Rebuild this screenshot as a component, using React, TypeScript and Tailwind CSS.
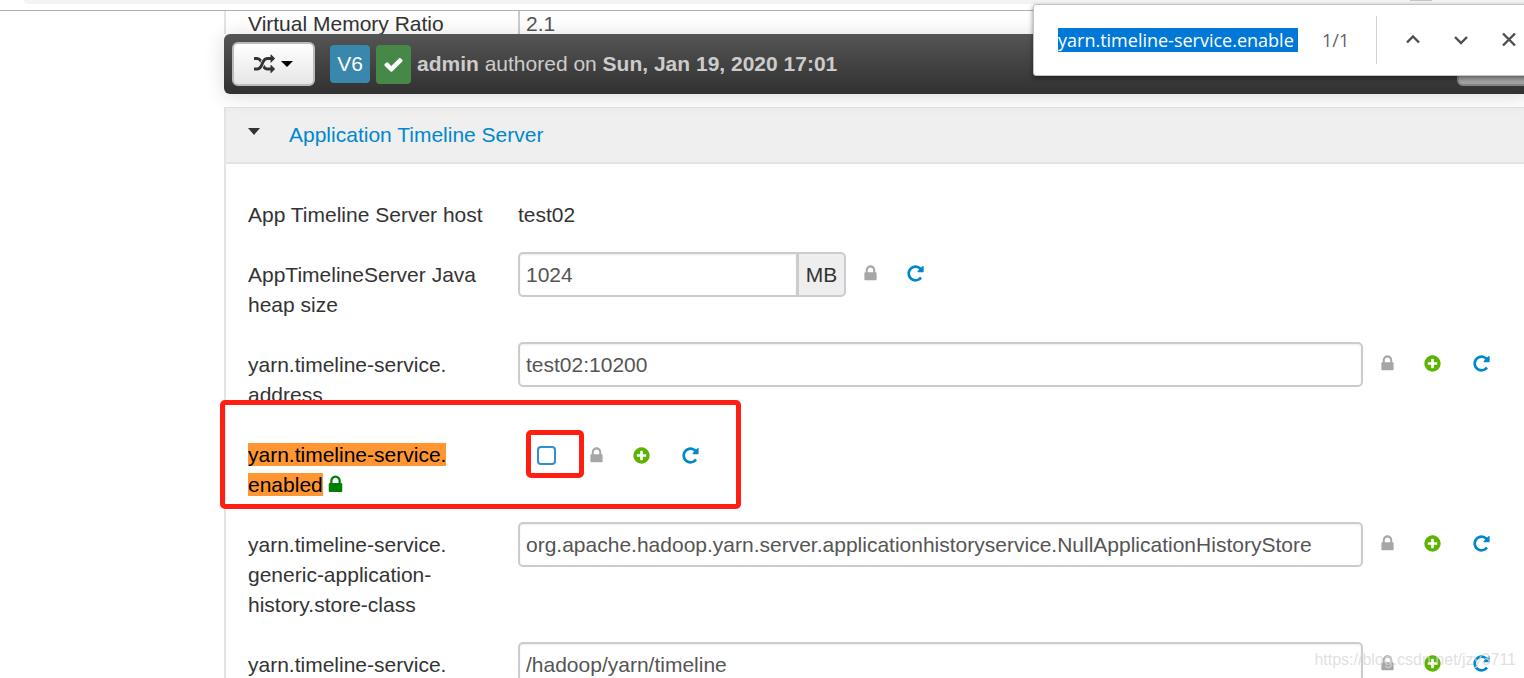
import type { ReactNode } from "react";

function Icon({ d, className }: { d: string; className: string }) {
  return (
    <svg viewBox="0 0 1792 1792" className={className} fill="currentColor" aria-hidden="true">
      <path d={d} />
    </svg>
  );
}

const LOCK =
  "M640 768h512v-192q0-106-75-181t-181-75-181 75-75 181v192zm832 96v576q0 40-28 68t-68 28h-960q-40 0-68-28t-28-68v-576q0-40 28-68t68-28h32v-192q0-184 132-316t316-132 316 132 132 316v192h32q40 0 68 28t28 68z";
const PLUS =
  "M1344 960v-128q0-26-19-45t-45-19h-256v-256q0-26-19-45t-45-19h-128q-26 0-45 19t-19 45v256h-256q-26 0-45 19t-19 45v128q0 26 19 45t45 19h256v256q0 26 19 45t45 19h128q26 0 45-19t19-45v-256h256q26 0 45-19t19-45zm320-64q0 209-103 385.5t-279.5 279.5-385.5 103-385.5-103-279.5-279.5-103-385.5 103-385.5 279.5-279.5 385.5-103 385.5 103 279.5 279.5 103 385.5z";
const REPEAT =
  "M1664 256v448q0 26-19 45t-45 19h-448q-42 0-59-40-17-39 14-69l138-138q-148-137-349-137-104 0-198.5 40.5t-163.5 109.5-109.5 163.5-40.5 198.5 40.5 198.5 109.5 163.5 163.5 109.5 198.5 40.5q119 0 225-52t179-147q7-10 23-12 15 0 25 9l137 138q9 8 9.5 20.5t-7.5 22.5q-109 132-264 204.5t-327 72.5q-156 0-298-61t-245-164-164-245-61-298 61-298 164-245 245-164 298-61q147 0 284.5 55.5t244.5 156.5l130-129q29-31 70-14 39 17 39 59z";
const CHECK =
  "M1671 566q0 40-28 68l-724 724-136 136q-28 28-68 28t-68-28l-136-136-362-362q-28-28-28-68t28-68l136-136q28-28 68-28t68 28l294 295 656-657q28-28 68-28t68 28l136 136q28 28 28 68z";
const RANDOM =
  "M666 481q-60 92-137 273-22-45-37-72.5t-40.5-63.5-51-56.5-63-35-81.5-14.5h-224q-14 0-23-9t-9-23v-192q0-14 9-23t23-9h224q250 0 410 225zm1126 799q0 14-9 23l-320 320q-9 9-23 9-13 0-22.5-9.5t-9.5-22.5v-192q-32 0-85 .5t-81 1-73-1-71-5-64-10.5-63-18.5-58-28.5-59-40-55-53.5-56-69.5q59-93 136-273 22 45 37 72.5t40.5 63.5 51 56.5 63 35 81.5 14.5h256v-192q0-14 9-23t23-9q12 0 24 10l319 319q9 9 9 23zm0-896q0 14-9 23l-320 320q-9 9-23 9-13 0-22.5-9.5t-9.5-22.5v-192h-256q-48 0-87 15t-69 45-51 61.5-45 77.5q-32 62-78 171-29 66-49.5 111t-54 105-64 100-74 83-90 68.5-106.5 42-128 16.5h-224q-14 0-23-9t-9-23v-192q0-14 9-23t23-9h224q48 0 87-15t69-45 51-61.5 45-77.5q32-62 78-171 29-66 49.5-111t54-105 64-100 74-83 90-68.5 106.5-42 128-16.5h256v-192q0-14 9-23t23-9q12 0 24 10l319 319q9 9 9 23z";

const fieldClass =
  "h-[45px] min-w-0 border-2 border-[#cccccc] bg-white px-[6px] text-[#555555] shadow-[inset_0_1px_2px_rgba(0,0,0,0.08)] outline-none";

function Actions({ override = true }: { override?: boolean }) {
  return (
    <div className="flex h-[42px] shrink-0 items-center pl-[15px]">
      <button type="button" aria-label="Final" className="text-[#a6a6a6]">
        <Icon d={LOCK} className="size-[19px]" />
      </button>
      {override && (
        <button type="button" aria-label="Override" className="ml-[26px] text-[#5ab400]">
          <Icon d={PLUS} className="size-[19px]" />
        </button>
      )}
      <button
        type="button"
        aria-label="Undo"
        className={override ? "ml-[30px] text-[#0088cc]" : "ml-[26px] text-[#0088cc]"}
      >
        <Icon d={REPEAT} className="size-[19px]" />
      </button>
    </div>
  );
}

function Row({ id, label, children }: { id?: string; label: ReactNode; children: ReactNode }) {
  return (
    <div className="relative flex shrink-0 items-start">
      {id ? (
        <label htmlFor={id} className="w-[270px] shrink-0 pt-2">
          {label}
        </label>
      ) : (
        <span className="w-[270px] shrink-0 pt-2">{label}</span>
      )}
      {children}
    </div>
  );
}

function TextRow({ id, label, value }: { id: string; label: ReactNode; value: string }) {
  return (
    <Row id={id} label={label}>
      <input id={id} defaultValue={value} className={`${fieldClass} flex-1 rounded-[5px]`} />
      <Actions />
    </Row>
  );
}

function FindBar() {
  return (
    <div className="absolute top-1 -right-1 z-20 flex h-[72px] w-[495px] items-center rounded-[3px] border border-[#c4c4c4] bg-white pl-6 font-['Open_Sans',sans-serif] text-[#5f6368] shadow-[0_2px_5px_rgba(0,0,0,0.45)]">
      <input
        aria-label="Find in page"
        defaultValue="yarn.timeline-service.enable"
        className="h-6 w-60 shrink-0 bg-[#0078d7] text-[18px] leading-6 text-white outline-none"
      />
      <span className="ml-6 w-[54px] text-[18px]">1/1</span>
      <span className="h-12 w-px bg-[#d0d0d0]" />
      <div className="ml-[28px] flex items-center gap-[32px] text-[#4d4f52]">
        <button type="button" aria-label="Previous">
          <svg viewBox="0 0 16 16" className="size-4" fill="none" stroke="currentColor" strokeWidth="2.4">
            <path d="M2 10.500 8 4.500 14 10.500" />
          </svg>
        </button>
        <button type="button" aria-label="Next">
          <svg viewBox="0 0 16 16" className="size-4" fill="none" stroke="currentColor" strokeWidth="2.4">
            <path d="M2 5 8 11 14 5" />
          </svg>
        </button>
        <button type="button" aria-label="Close">
          <svg viewBox="0 0 16 16" className="size-4" fill="none" stroke="currentColor" strokeWidth="2.4">
            <path d="M2 1.500 14 13.500M14 1.500 2 13.500" />
          </svg>
        </button>
      </div>
    </div>
  );
}

export default function App() {
  return (
    <div className="relative flex h-screen flex-col overflow-hidden bg-white font-['Liberation_Sans',Arial,sans-serif] text-[21px] leading-[30px] text-[#333333]">
      <header className="flex h-[11px] shrink-0 items-start border-b border-[#b0b0b0] pl-6">
        <div className="flex h-1 flex-1 items-start justify-end rounded-bl-[12px] bg-[#f1f3f4] pr-[92px]">
          <span className="h-px w-[22px] bg-[#c4c6c9]" />
        </div>
      </header>
      <FindBar />

      <main className="flex min-h-0 flex-1 flex-col pl-56">
        <div className="flex h-[23px] shrink-0 items-end overflow-hidden border-l-2 border-[#e3e3e3] pl-[22px]">
          <label htmlFor="vmem" className="h-[25px] w-[270px] shrink-0">
            Virtual Memory Ratio
          </label>
          <input
            id="vmem"
            defaultValue="2.1"
            className="h-[25px] w-[845px] border-l-2 border-[#cccccc] px-[6px] pt-1 text-[#555555] outline-none"
          />
        </div>

        <div className="z-10 -mr-2 flex h-[60px] shrink-0 items-center rounded-md bg-linear-to-b from-[#555555] to-[#313131] pl-2 text-[#cccccc] shadow-[0_2px_20px_rgba(0,0,0,0.15)]">
          <button
            type="button"
            aria-label="Compare versions"
            className="flex h-11 w-[83px] items-center justify-center gap-[6px] rounded-md border-2 border-[#bbbbbb] bg-linear-to-b from-white to-[#e6e6e6] text-[#333333]"
          >
            <Icon d={RANDOM} className="size-[21px]" />
            <svg viewBox="0 0 12 6" className="h-[6px] w-3" fill="#000" aria-hidden="true">
              <path d="M0 0h12L6 6z" />
            </svg>
          </button>
          <span className="ml-[15px] flex h-[38px] w-10 items-center justify-center rounded-[4px] bg-[#3a87ad] text-white">
            V6
          </span>
          <span className="ml-[6px] flex h-[39px] w-[35px] items-center justify-center rounded-[4px] bg-[#468847] text-white">
            <Icon d={CHECK} className="size-[21px]" />
          </span>
          <p className="ml-[6px] whitespace-nowrap">
            <strong>admin</strong> authored on <strong>Sun, Jan 19, 2020 17:01</strong>
          </p>
          <button
            type="button"
            aria-label="Make Current"
            className="ml-auto h-11 w-[75px] rounded-l-md border-2 border-[#858585] bg-[#a3a3a3]"
          />
        </div>

        <section className="mt-[13px] flex min-h-0 flex-1 flex-col border-l-2 border-[#e3e3e3]">
          <h2 className="flex h-[57px] shrink-0 items-center border-t border-b-2 border-t-[#e0e0e0] border-b-[#e3e3e3] bg-[#efefef] pl-[22px]">
            <svg viewBox="0 0 12 7" className="mb-2 h-[7px] w-3" fill="#333" aria-hidden="true">
              <path d="M0 0h12L6 7z" />
            </svg>
            <a href="#application-timeline-server" className="ml-[29px] text-[#0088cc]">
              Application Timeline Server
            </a>
          </h2>

          <div className="flex flex-col gap-[22px] pt-7 pr-[33px] pl-[22px]">
            <Row label="App Timeline Server host">
              <span className="pt-2">test02</span>
            </Row>
            <Row
              id="heap"
              label={
                <>
                  AppTimelineServer Java
                  <br />
                  heap size
                </>
              }
            >
              <input id="heap" defaultValue="1024" className={`${fieldClass} w-[280px] rounded-l-[5px]`} />
              <span className="-ml-px flex h-[45px] w-[49px] items-center justify-center rounded-r-[5px] border-2 border-[#cccccc] bg-[#eeeeee]">
                MB
              </span>
              <Actions override={false} />
            </Row>
            <TextRow
              id="address"
              label={
                <>
                  yarn.timeline-service.
                  <br />
                  address
                </>
              }
              value="test02:10200"
            />
            <Row
              id="enabled"
              label={
                <>
                  <span className="bg-[#ff9632] text-black">yarn.timeline-service.</span>
                  <br />
                  <span className="bg-[#ff9632] text-black">enabled</span>
                  <Icon d={LOCK} className="ml-[2px] inline size-[21px] align-[-3px] text-[#008000]" />
                </>
              }
            >
              <div className="relative flex pt-[2px] pl-[19px]">
                <input
                  id="enabled"
                  type="checkbox"
                  className="mt-3 size-[19px] appearance-none rounded-[4px] border-2 border-[#2f8fd0] bg-white"
                />
                <div className="pl-4">
                  <Actions />
                </div>
                <div className="pointer-events-none absolute -top-[2px] left-2 h-12 w-[58px] rounded-[5px] border-5 border-[#ff1e12]" />
              </div>
              <div className="pointer-events-none absolute -top-8 -left-7 h-[109px] w-[521px] rounded-[5px] border-5 border-[#ff1e12]" />
            </Row>
            <TextRow
              id="store-class"
              label={
                <>
                  yarn.timeline-service.
                  <br />
                  generic-application-
                  <br />
                  history.store-class
                </>
              }
              value="org.apache.hadoop.yarn.server.applicationhistoryservice.NullApplicationHistoryStore"
            />
            <TextRow id="store-path" label="yarn.timeline-service." value="/hadoop/yarn/timeline" />
          </div>
        </section>
      </main>

      <span className="pointer-events-none absolute right-2 bottom-1 z-10 text-[16px] leading-7 text-[#d8d8d8]/80">
        https://blog.csdn.net/jzy3711
      </span>
    </div>
  );
}
